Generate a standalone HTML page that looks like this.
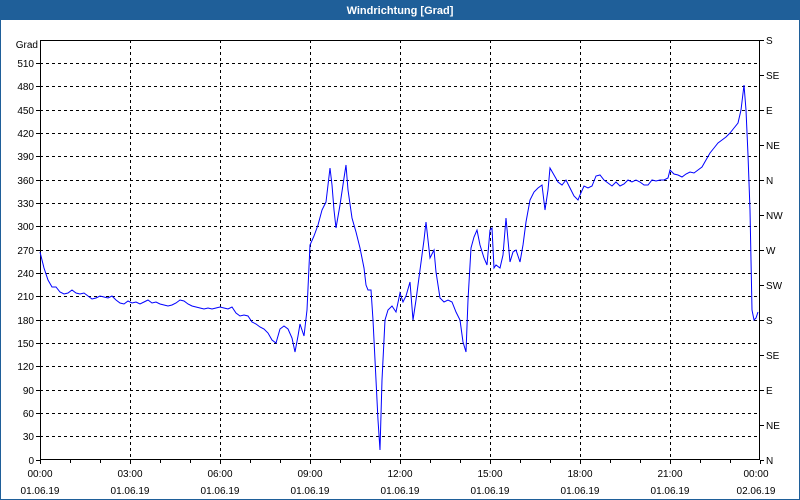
<!DOCTYPE html>
<html><head><meta charset="utf-8"><style>
html,body{margin:0;padding:0;background:#fff;}
body{width:800px;height:500px;overflow:hidden;position:relative;font-family:"Liberation Sans",Tahoma,sans-serif;}
</style></head><body>
<svg width="800" height="500" viewBox="0 0 800 500" xmlns="http://www.w3.org/2000/svg" style="position:absolute;left:0;top:0">
<rect x="0" y="0" width="800" height="500" fill="#fff"/>
<rect x="0.5" y="0.5" width="799" height="499" fill="none" stroke="#1f5f99" stroke-width="1"/>
<rect x="0" y="0" width="800" height="20" fill="#1f5f99"/>
<text x="400" y="14" fill="#fff" font-size="11" font-weight="bold" text-anchor="middle">Windrichtung [Grad]</text>
<g stroke="#000" stroke-width="1" stroke-dasharray="3,3" fill="none">
<path d="M40,63.5H760M40,86.5H760M40,110.5H760M40,133.5H760M40,156.5H760M40,180.5H760M40,203.5H760M40,226.5H760M40,250.5H760M40,273.5H760M40,296.5H760M40,320.5H760M40,343.5H760M40,366.5H760M40,390.5H760M40,413.5H760M40,436.5H760"/>
<path d="M130.5,40V460M220.5,40V460M310.5,40V460M400.5,40V460M490.5,40V460M580.5,40V460M670.5,40V460"/>
</g>
<rect x="40.5" y="40.5" width="719" height="419" fill="none" stroke="#000"/>
<g stroke="#000">
<path d="M36,63.5H40M36,86.5H40M36,110.5H40M36,133.5H40M36,156.5H40M36,180.5H40M36,203.5H40M36,226.5H40M36,250.5H40M36,273.5H40M36,296.5H40M36,320.5H40M36,343.5H40M36,366.5H40M36,390.5H40M36,413.5H40M36,436.5H40M36,460.5H40"/>
<path d="M760,40.5h4M760,75.5h4M760,110.5h4M760,145.5h4M760,180.5h4M760,215.5h4M760,250.5h4M760,285.5h4M760,320.5h4M760,355.5h4M760,390.5h4M760,425.5h4M760,460.5h4"/>
<path d="M40.5,460v4M70.5,460v3M100.5,460v3M130.5,460v4M160.5,460v3M190.5,460v3M220.5,460v4M250.5,460v3M280.5,460v3M310.5,460v4M340.5,460v3M370.5,460v3M400.5,460v4M430.5,460v3M460.5,460v3M490.5,460v4M520.5,460v3M550.5,460v3M580.5,460v4M610.5,460v3M640.5,460v3M670.5,460v4M700.5,460v3M730.5,460v3M760.5,460v4"/>
</g>
<g font-size="10" fill="#000" text-anchor="end">
<text x="38" y="48">Grad</text>
<text x="34" y="67">510</text><text x="34" y="90">480</text><text x="34" y="114">450</text><text x="34" y="137">420</text><text x="34" y="160">390</text><text x="34" y="184">360</text><text x="34" y="207">330</text><text x="34" y="230">300</text><text x="34" y="254">270</text><text x="34" y="277">240</text><text x="34" y="300">210</text><text x="34" y="324">180</text><text x="34" y="347">150</text><text x="34" y="370">120</text><text x="34" y="394">90</text><text x="34" y="417">60</text><text x="34" y="440">30</text><text x="34" y="464">0</text>
</g>
<g font-size="10" fill="#000">
<text x="766" y="44">S</text><text x="766" y="79">SE</text><text x="766" y="114">E</text><text x="766" y="149">NE</text><text x="766" y="184">N</text><text x="766" y="219">NW</text><text x="766" y="254">W</text><text x="766" y="289">SW</text><text x="766" y="324">S</text><text x="766" y="359">SE</text><text x="766" y="394">E</text><text x="766" y="429">NE</text><text x="766" y="464">N</text>
</g>
<g font-size="10" fill="#000" text-anchor="middle">
<text x="40" y="477">00:00</text><text x="40" y="494">01.06.19</text>
<text x="130" y="477">03:00</text><text x="130" y="494">01.06.19</text>
<text x="220" y="477">06:00</text><text x="220" y="494">01.06.19</text>
<text x="310" y="477">09:00</text><text x="310" y="494">01.06.19</text>
<text x="400" y="477">12:00</text><text x="400" y="494">01.06.19</text>
<text x="490" y="477">15:00</text><text x="490" y="494">01.06.19</text>
<text x="580" y="477">18:00</text><text x="580" y="494">01.06.19</text>
<text x="670" y="477">21:00</text><text x="670" y="494">01.06.19</text>
<text x="756" y="477">00:00</text><text x="756" y="494">02.06.19</text>
</g>
<polyline fill="none" stroke="#0000ff" stroke-width="1" points="40,252 44,268 48,280 52,287 56,287 60,292 64,294 68,293 72,290 76,293 80,294 84,293 88,296 92,299 96,298 100,296 104,297 108,298 112,296 116,300 120,303 124,304 128,301 132,303 136,302 140,304 144,302 148,300 152,303 156,302 160,304 164,305 168,306 172,305 176,303 180,300 184,301 188,304 192,306 196,307 200,308 204,309 208,308 212,309 216,308 220,307 224,308 228,309 232,307 236,313 240,316 244,315 248,316 252,322 256,324 260,327 264,329 268,333 272,340 276,343 280,329 284,326 288,329 292,338 295,352 298,336 300,324 304,336 307,310 310,245 314,236 318,225 322,210 326,202 330,168 332,185 334,210 336,228 340,205 344,178 346,165 348,190 352,218 356,232 360,248 364,268 366,285 368,290 371,290 373,320 376,380 378,420 380,450 382,380 385,320 388,310 392,306 396,312 400,293 403,302 406,296 410,282 413,320 416,300 420,270 424,240 426,222 428,240 430,258 434,250 436,272 440,298 444,302 448,300 452,302 456,312 460,320 463,342 466,352 468,300 471,248 474,237 477,230 480,245 484,258 487,265 490,230 492,228 494,268 496,265 500,268 503,255 506,218 508,240 510,262 513,252 516,250 518,256 520,262 523,245 526,222 530,200 534,192 538,188 542,185 545,210 548,190 550,168 554,175 558,182 562,185 566,180 570,188 574,196 578,200 580,195 584,186 588,188 592,186 596,176 600,175 604,180 608,183 612,186 616,182 620,186 624,184 628,180 632,182 636,180 640,182 644,185 648,185 652,180 656,181 660,180 664,180 668,178 670,170 674,174 678,175 682,177 686,174 690,172 694,173 698,170 702,167 706,160 710,153 714,148 718,143 722,140 726,137 730,133 734,128 738,123 741,110 744,85 746,110 748,155 750,210 752,310 754,320 756,318 758,312"/>
</svg>
</body></html>
